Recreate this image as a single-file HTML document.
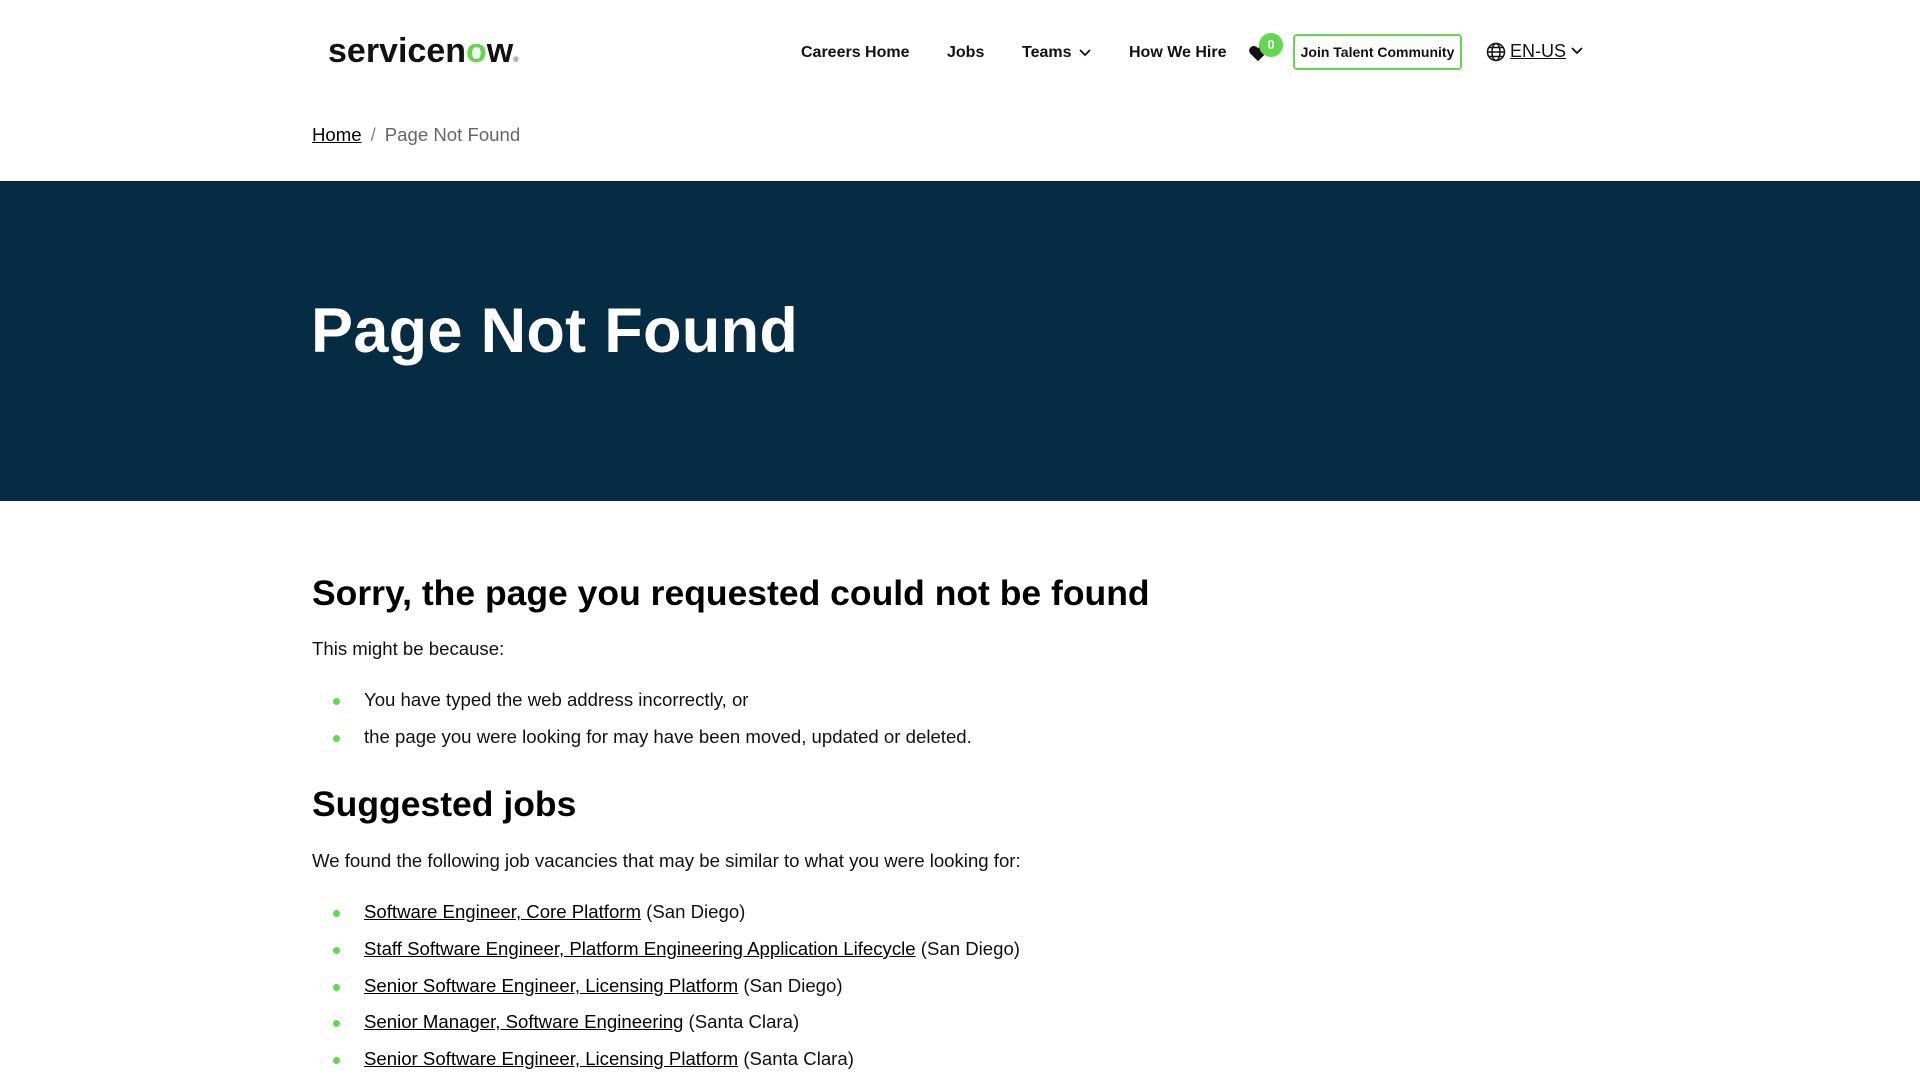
<!DOCTYPE html>
<html><head><meta charset="utf-8"><style>
*{margin:0;padding:0;box-sizing:border-box}
body{width:1920px;height:1080px;overflow:hidden;background:#fff;font-family:"Liberation Sans",sans-serif;color:#000}
.abs{position:absolute;white-space:nowrap}
.nav{font-size:16px;font-weight:bold;color:#111}
a{color:#000}
.hero{position:absolute;left:0;top:181px;width:1920px;height:320px;background:#052c42}
.hero h1{position:absolute;left:311px;top:114px;font-size:63px;color:#fff;font-weight:bold;letter-spacing:0.3px}
h2{font-size:35.5px;font-weight:bold}
.t{font-size:18.6px;color:#111}
.dot{position:absolute;width:7px;height:7px;border-radius:50%;background:#62d84e}
</style></head><body>
<div class="abs" style="left:328px;top:32px;font-size:34px;font-weight:bold;color:#111">servicen<span style="color:#62d84e">o</span>w<span style="font-size:7px;font-weight:normal">®</span></div>
<div class="abs nav" style="left:801px;top:44px">Careers Home</div>
<div class="abs nav" style="left:947px;top:44px">Jobs</div>
<div class="abs nav" style="left:1022px;top:44px">Teams <svg width="12" height="8" viewBox="0 0 12 8" style="margin-left:3px"><path d="M1 1l5 5 5-5" stroke="#111" stroke-width="1.8" fill="none"/></svg></div>
<div class="abs nav" style="left:1129px;top:44px">How We Hire</div>
<svg class="abs" style="left:1247px;top:42px" width="22" height="22" viewBox="0 0 24 24"><path d="M12 21l-9-9a5 5 0 0 1 9-5 5 5 0 0 1 9 5z" fill="#111"/></svg>
<div class="abs" style="left:1259px;top:33px;width:24px;height:24px;border-radius:50%;background:#62d84e;color:#fff;font-size:13px;font-weight:bold;text-align:center;line-height:24px">0</div>
<div class="abs" style="left:1293px;top:34px;width:169px;height:36px;border:2px solid #62d84e;border-radius:4px;font-size:14px;font-weight:bold;text-align:center;line-height:32px;color:#111">Join Talent Community</div>
<svg class="abs" style="left:1486px;top:42px" width="20" height="20" viewBox="0 0 20 20" fill="none" stroke="#111" stroke-width="1.5"><circle cx="10" cy="10" r="8.5"/><ellipse cx="10" cy="10" rx="4" ry="8.5"/><path d="M1.5 10h17M3 5.5h14M3 14.5h14"/></svg>
<div class="abs" style="left:1510px;top:41px;font-size:18px;text-decoration:underline;color:#111">EN-US</div>
<svg class="abs" style="left:1571px;top:47px" width="12" height="8" viewBox="0 0 12 8"><path d="M1 1l5 5 5-5" stroke="#111" stroke-width="1.8" fill="none"/></svg>
<div class="abs t" style="left:312px;top:124px"><a href="#">Home</a><span style="color:#888;margin:0 9px">/</span><span style="color:#666">Page Not Found</span></div>
<div class="hero"><h1>Page Not Found</h1></div>
<h2 class="abs" style="left:312px;top:573px">Sorry, the page you requested could not be found</h2>
<div class="abs t" style="left:312px;top:638px">This might be because:</div>
<div class="dot" style="left:333px;top:698px"></div><div class="abs t" style="left:364px;top:689px">You have typed the web address incorrectly, or</div>
<div class="dot" style="left:333px;top:735px"></div><div class="abs t" style="left:364px;top:726px">the page you were looking for may have been moved, updated or deleted.</div>
<h2 class="abs" style="left:312px;top:784px">Suggested jobs</h2>
<div class="abs t" style="left:312px;top:850px">We found the following job vacancies that may be similar to what you were looking for:</div>
<div class="dot" style="left:333px;top:910px"></div><div class="abs t" style="left:364px;top:901px"><a href="#">Software Engineer, Core Platform</a> (San Diego)</div>
<div class="dot" style="left:333px;top:947px"></div><div class="abs t" style="left:364px;top:938px"><a href="#">Staff Software Engineer, Platform Engineering Application Lifecycle</a> (San Diego)</div>
<div class="dot" style="left:333px;top:984px"></div><div class="abs t" style="left:364px;top:975px"><a href="#">Senior Software Engineer, Licensing Platform</a> (San Diego)</div>
<div class="dot" style="left:333px;top:1020px"></div><div class="abs t" style="left:364px;top:1011px"><a href="#">Senior Manager, Software Engineering</a> (Santa Clara)</div>
<div class="dot" style="left:333px;top:1057px"></div><div class="abs t" style="left:364px;top:1048px"><a href="#">Senior Software Engineer, Licensing Platform</a> (Santa Clara)</div>
</body></html>
